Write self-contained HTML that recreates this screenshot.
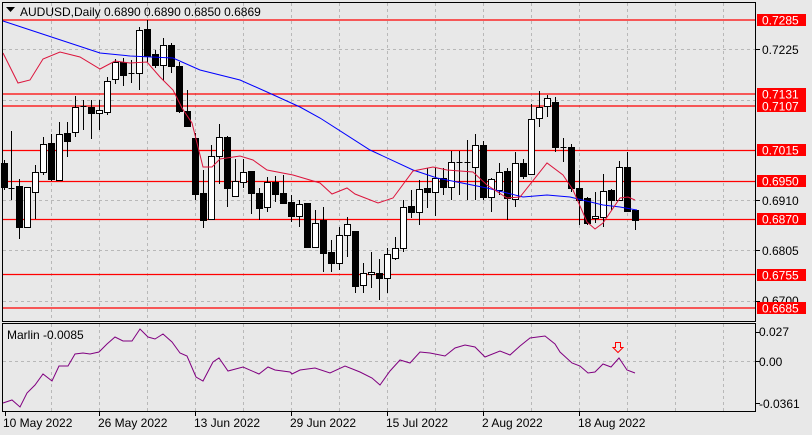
<!DOCTYPE html>
<html><head><meta charset="utf-8">
<style>
html,body{margin:0;padding:0;background:#e8e8e8;}
svg{display:block;font-family:"Liberation Sans",sans-serif;}
</style></head>
<body>
<svg id="c" width="812" height="435" viewBox="0 0 812 435" xmlns="http://www.w3.org/2000/svg">
<rect width="812" height="435" fill="#e8e8e8"/>
<g stroke="#b8b8b8" stroke-dasharray="3,3" stroke-width="1" fill="none">
<path d="M51.5 3V321M99.5 3V321M147.5 3V321M195.5 3V321M243.5 3V321M291.5 3V321M339.5 3V321M387.5 3V321M435.5 3V321M483.5 3V321M531.5 3V321M579.5 3V321M627.5 3V321M675.5 3V321M723.5 3V321"/>
<path d="M51.5 324V411M99.5 324V411M147.5 324V411M195.5 324V411M243.5 324V411M291.5 324V411M339.5 324V411M387.5 324V411M435.5 324V411M483.5 324V411M531.5 324V411M579.5 324V411M627.5 324V411M675.5 324V411M723.5 324V411"/>
<path d="M3 49.5H755M3 100.5H755M3 200.5H755M3 250.5H755M3 301.5H755M3 361.5H755"/>
</g>
<g stroke="#ff0000" stroke-width="1.3">
<path d="M3 20H756M3 94H756M3 106H756M3 150.5H756M3 181.5H756M3 219.5H756M3 274.5H756M3 308H756"/>
</g>
<g id="candles"></g>
<polyline fill="none" stroke="#0000ff" stroke-width="1" points="3,21 100,53 130,56 173,58 200,70 240,80 267,92 300,107 320,118 370,150 413,170 437,178 487,188 523,197 547,195 570,197 603,205 620,207 637,210"/>
<polyline fill="none" stroke="#dc143c" stroke-width="1" points="3,53 18,83 30,80 43,59 60,52 80,57 100,69 115,61 130,63 147,62 160,77 173,90 182,108 192,123 203,167 212,167 220,159 240,156 253,160 267,170 293,175 320,183 332,194 347,188 355,194 378,203 393,198 413,171 433,167 447,170 473,172 487,185 507,198 520,197 547,163 563,175 573,190 587,222 595,229 603,223 620,198 628,197 635,200"/>
<polyline fill="none" stroke="#800080" stroke-width="1" points="3,403 12,400 20,407 27,393 35,385 43,374 52,381 59,366 68,366 75,354 83,353 90,354 99,352 107,344 115,337 123,341 132,341 140,329 148,337 155,339 163,334 172,342 180,353 187,356 196,377 203,381 213,362 219,358 228,371 243,367 259,374 268,367 275,370 290,372 292,374 300,370 315,368 330,373 345,366 360,372 372,378 380,385 390,371 400,360 410,363 420,352 430,353 445,356 455,348 465,345 475,347 485,357 500,351 510,355 520,346 530,338 545,336 555,344 560,352 572,363 580,366 588,373 595,372 603,364 611,367 619,358 627,370 635,373"/>
<path d="M615.5 342.5h5v5h2.5l-5 5l-5-5h2.5z" fill="none" stroke="#ff0000" stroke-width="1"/>
<rect x="2.5" y="2.5" width="753" height="319" fill="none" stroke="#000" stroke-width="1"/>
<rect x="2.5" y="323.5" width="753" height="88" fill="none" stroke="#000" stroke-width="1"/>
<path d="M756 49.5h4M756 200.5h4M756 250.5h4M756 301.5h4M756 332.5h4M756 361.5h4M756 403.5h4M5.5 412v4M99.5 412v4M195.5 412v4M291.5 412v4M387.5 412v4M483.5 412v4M579.5 412v4" stroke="#000"/>
<path d="M6 7h9l-4.5 5z" fill="#000"/>
<text x="20" y="16" font-size="12" fill="#000">AUDUSD,Daily  0.6890 0.6890 0.6850 0.6869</text>
<text x="7" y="339" font-size="12" fill="#000">Marlin -0.0085</text>
<text x="762" y="305" font-size="12" fill="#000">0.6700</text>
<g font-size="12" fill="#fff">
<rect x="757" y="14" width="49" height="12" fill="#ff0000"/><text x="762" y="24.5">0.7285</text>
<rect x="757" y="88" width="49" height="12" fill="#ff0000"/><text x="762" y="98.5">0.7131</text>
<rect x="757" y="100" width="49" height="12" fill="#ff0000"/><text x="762" y="110.5">0.7107</text>
<rect x="757" y="144" width="49" height="12" fill="#ff0000"/><text x="762" y="154.5">0.7015</text>
<rect x="757" y="175" width="49" height="12" fill="#ff0000"/><text x="762" y="185.5">0.6950</text>
<rect x="757" y="213" width="49" height="12" fill="#ff0000"/><text x="762" y="223.5">0.6870</text>
<rect x="757" y="269" width="49" height="12" fill="#ff0000"/><text x="762" y="279.5">0.6755</text>
<rect x="757" y="302" width="49" height="12" fill="#ff0000"/><text x="762" y="312.5">0.6685</text>
</g>
<g font-size="12" fill="#000">
<text x="762" y="54">0.7225</text>
<text x="762" y="205">0.6910</text>
<text x="762" y="255">0.6805</text>
<text x="759" y="336">0.027</text>
<text x="759" y="366">0.00</text>
<text x="759" y="408">-0.0361</text>
<text x="3" y="427">10 May 2022</text>
<text x="98" y="427">26 May 2022</text>
<text x="194" y="427">13 Jun 2022</text>
<text x="290" y="427">29 Jun 2022</text>
<text x="386" y="427">15 Jul 2022</text>
<text x="482" y="427">2 Aug 2022</text>
<text x="578" y="427">18 Aug 2022</text>
</g>
</svg>
<script>
var d=[
[4,160,163,187,190,0],[11,131,188,188,200,2],[19,179,186,227,239,0],[27,187,187,227,227,1],[35,165,172,192,219,1],[43,137,144,172,175,1],[51,134,143,179,181,0],[59,122,134,180,180,1],[67,122,133,141,157,0],[75,96,107,132,137,1],[83,100,106,106,130,2],[91,100,107,113,139,0],[99,100,110,113,130,1],[107,77,81,112,115,1],[115,59,62,79,84,1],[123,58,62,75,86,0],[131,60,73,73,83,2],[139,27,30,73,90,1],[147,20,29,56,62,0],[155,50,54,65,68,0],[163,38,45,65,81,1],[171,43,45,66,73,0],[179,62,66,111,113,0],[187,90,111,126,127,0],[195,133,138,194,200,0],[203,170,193,220,228,0],[211,145,156,219,220,1],[219,124,137,156,184,1],[227,136,137,188,207,0],[235,159,181,196,196,1],[243,159,172,182,188,1],[251,171,171,193,214,0],[259,188,193,208,220,0],[267,177,182,207,212,1],[275,176,182,194,202,0],[283,175,193,203,203,0],[291,195,202,216,222,0],[299,200,204,216,227,1],[307,203,203,247,248,0],[315,210,223,247,247,1],
[323,207,220,253,272,0],[331,240,252,263,272,0],[339,227,235,263,270,1],[347,217,224,235,257,1],[355,231,231,286,293,0],[363,263,273,285,293,1],[371,252,272,274,288,1],[379,259,273,278,300,0],[387,248,254,278,293,1],[395,237,248,258,260,1],[403,200,207,248,252,1],[411,190,206,212,218,0],[419,180,189,212,225,1],[427,168,188,192,208,0],[435,168,178,192,216,1],[443,168,178,187,195,0],[451,151,162,187,200,1],[459,151,162,162,195,2],[467,140,162,162,200,2],[475,134,145,167,200,1],[483,141,145,197,200,0],[491,178,179,197,212,1],[499,163,172,190,195,1],[507,168,171,198,220,0],[515,152,163,199,207,1],[523,159,163,176,179,0],[531,104,119,174,175,1],[539,91,107,118,127,1],[547,95,98,106,117,1],[555,97,102,147,152,0],[563,138,147,147,162,2],[571,144,147,188,192,0],[579,170,188,200,225,0],[587,197,198,223,225,0],[595,192,216,218,223,1],[603,174,191,217,227,1],[611,189,190,200,210,0],[619,161,167,200,200,1],[627,152,167,211,212,0],[635,210,210,220,230,0]];
var g=document.getElementById('candles'),s='';
d.forEach(function(c){var x=c[0]+0.5;
s+='<line x1="'+x+'" y1="'+c[1]+'" x2="'+x+'" y2="'+c[4]+'" stroke="#000"/>';
if(c[5]==2){s+='<line x1="'+(x-3)+'" y1="'+(c[2]+0.5)+'" x2="'+(x+3)+'" y2="'+(c[2]+0.5)+'" stroke="#000"/>';}
else{var h=Math.max(1,c[3]-c[2]);s+='<rect x="'+(x-3)+'" y="'+(c[2]+0.5)+'" width="6" height="'+h+'" fill="'+(c[5]?'#fff':'#000')+'" stroke="#000"/>';}
});
g.innerHTML=s;
</script>
</body></html>
